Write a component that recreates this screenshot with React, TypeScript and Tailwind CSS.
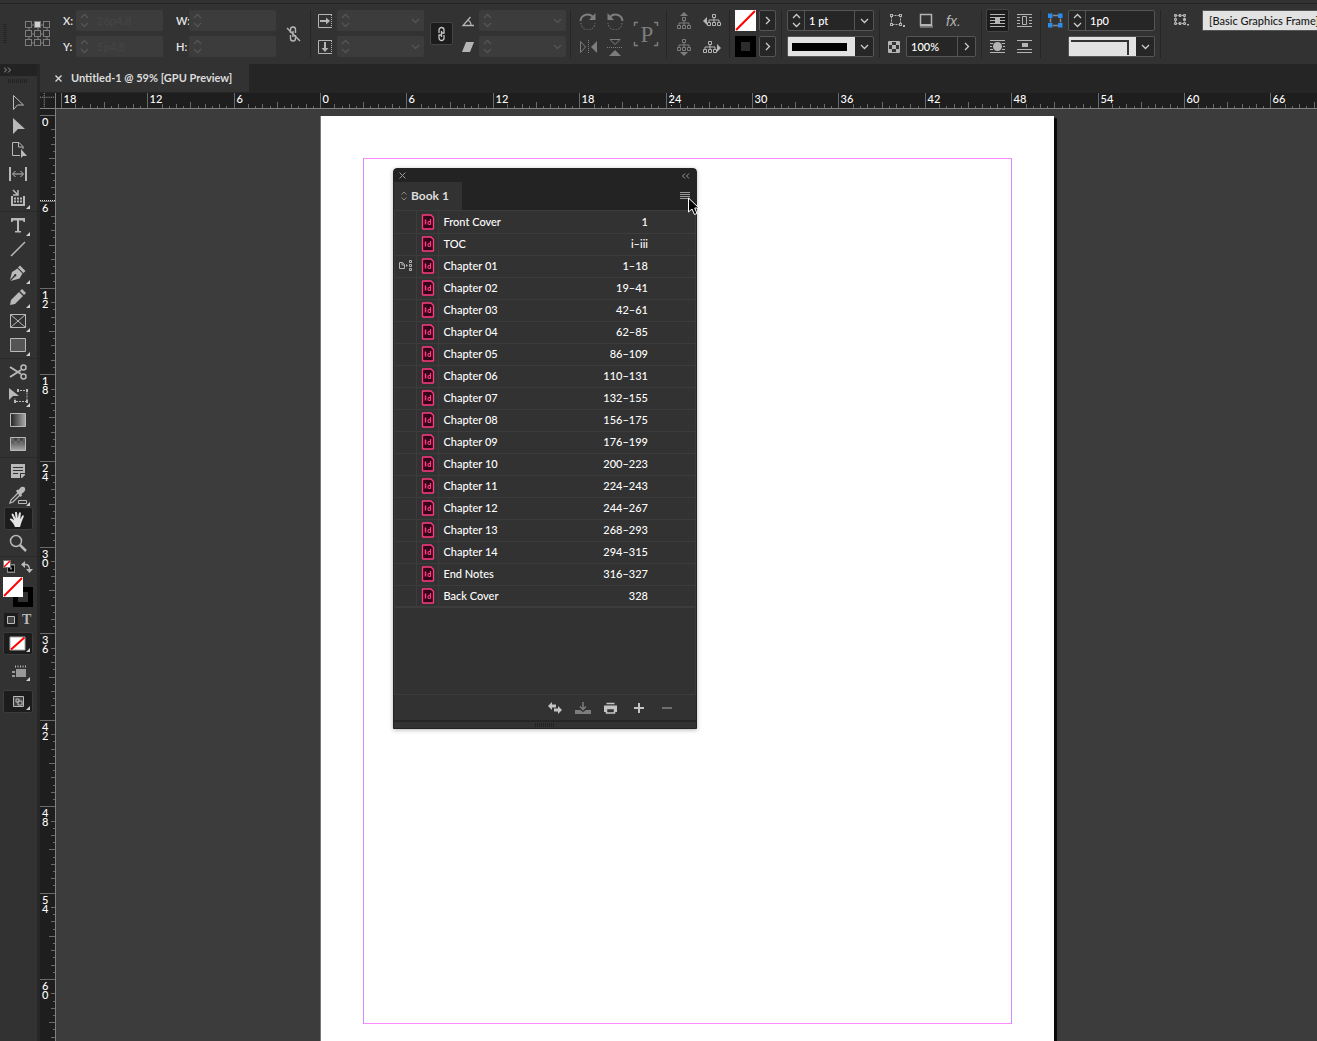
import type { ReactNode } from "react";
import clsx from "clsx";

type IconProps = { children: ReactNode; w?: number; h?: number; className?: string };

const Icon = ({ children, w = 18, h = 18, className }: IconProps) => (
	<svg
		width={w}
		height={h}
		viewBox={`0 0 ${w} ${h}`}
		fill="none"
		stroke="currentColor"
		className={clsx("block shrink-0", className)}
		aria-hidden="true"
	>
		{children}
	</svg>
);

const Separator = () => <div className="h-12 w-px shrink-0 bg-[#262626]" />;

const Stepper = () => (
	<Icon w={9} h={15}>
		<path d="M1 5 4.5 1.5 8 5M1 10l3.500 3.500L8 10" strokeWidth="1.300" />
	</Icon>
);

const ChevronDown = () => (
	<Icon w={9} h={6}>
		<path d="M1 1l3.500 3.500L8 1" strokeWidth="1.300" />
	</Icon>
);

const ChevronRight = () => (
	<Icon w={6} h={9}>
		<path d="M1 1l3.500 3.500L1 8" strokeWidth="1.300" />
	</Icon>
);

type MutedFieldProps = { label: string; value?: string; dropdown?: boolean };

const MutedField = ({ label, value = "", dropdown }: MutedFieldProps) => (
	<div className="flex h-[21px] w-[87px] items-center rounded-xs bg-[#3c3c3c] px-1 text-[#555]">
		<Stepper />
		<input
			id={label}
			aria-label={label}
			defaultValue={value}
			className="ml-2 w-0 flex-1 bg-transparent text-[#454545] outline-none"
		/>
		{dropdown && (
			<button aria-label={`${label} presets`}>
				<ChevronDown />
			</button>
		)}
	</div>
);

const LabelledField = ({ label, text, value }: { label: string; text: string; value?: string }) => (
	<div className="flex items-center">
		<label htmlFor={label} className="w-[13px] font-semibold text-[#e6e6e6]">
			{text}
		</label>
		<MutedField label={label} value={value} />
	</div>
);

const Tree = () => (
	<path d="M7.500 1.500h3v3h-3zM2.500 9.500h3v3h-3zM7.500 9.500h3v3h-3zM12.500 9.500h3v3h-3zM9 4.500v5M4 9V7h10v2" />
);

const NoneSwatch = ({ size }: { size: number }) => (
	<svg width={size} height={size} viewBox="0 0 20 20" aria-hidden="true" className="shrink-0">
		<path d="M0 0h20v20H0z" fill="#fff" />
		<path d="M1 19 19 1" stroke="#f00" strokeWidth="2" />
	</svg>
);

const box = "flex items-center rounded-xs border border-[#555] bg-[#262626]";

const ReferencePoint = () => (
	<Icon w={26} h={26} className="ml-[18px] text-[#7d7d7d]">
		<path d="M7 4h3M16 4h3M7 13h3M16 13h3M7 22h3M16 22h3M4 7v3M4 16v3M13 7v3M13 16v3M22 7v3M22 16v3" />
		{[1, 10, 19].map((y) =>
			[1, 10, 19].map((x) => (
				<rect
					key={`${x}-${y}`}
					x={x - 0.5}
					y={y - 0.5}
					width="6"
					height="6"
					fill={x === 10 && y === 1 ? "#d0d0d0" : "none"}
				/>
			)),
		)}
	</Icon>
);

const TransformGroup = () => (
	<>
		<div className="ml-3 grid gap-[5px]">
			<LabelledField label="x-position" text="X:" value="26p4.8" />
			<LabelledField label="y-position" text="Y:" value="5p4.8" />
		</div>
		<div className="ml-[13px] grid gap-[5px]">
			<LabelledField label="width" text="W:" />
			<LabelledField label="height" text="H:" />
		</div>
		<button aria-label="Constrain proportions" className="ml-2">
			<Icon className="text-[#b4b4b4]">
				<path d="M6.500 8V4.500a2.500 2.500 0 0 1 5 0V8M6.500 10v3.500a2.500 2.500 0 0 0 5 0V10M9 6v6" strokeWidth="1.400" />
				<path d="M3 3l13 13" strokeWidth="1.400" />
			</Icon>
		</button>
		<div className="ml-2"><Separator /></div>
		<div className="ml-1.5 grid gap-[5px]">
			<div className="flex items-center gap-1">
				<Icon w={16} h={16} className="text-[#b4b4b4]">
					<path d="M15 1.500H1.500v13H15" />
					<path d="M14.500 2v13" strokeDasharray="1 1" />
					<path d="M3 8h7" strokeWidth="2" />
					<path d="M9 4.500 13 8l-4 3.500z" fill="currentColor" stroke="none" />
				</Icon>
				<MutedField label="Scale X" dropdown />
			</div>
			<div className="flex items-center gap-1">
				<Icon w={16} h={16} className="text-[#b4b4b4]">
					<path d="M15 1.500H1.500v13H15" />
					<path d="M14.500 2v13" strokeDasharray="1 1" />
					<path d="M8 3v7" strokeWidth="2" />
					<path d="M4.500 9 8 13l3.500-4z" fill="currentColor" stroke="none" />
				</Icon>
				<MutedField label="Scale Y" dropdown />
			</div>
		</div>
		<button
			aria-label="Link scale"
			className="ml-1.5 flex h-[23px] w-[23px] items-center justify-center rounded-xs border border-[#444] bg-[#1c1c1c] text-[#c4c4c4]"
		>
			<Icon w={9} h={16}>
				<path d="M2 7V4a2.500 2.500 0 0 1 5 0v3H4M7 9v3a2.500 2.500 0 0 1-5 0V9h3M4.500 5v6" strokeWidth="1.300" />
			</Icon>
		</button>
		<div className="ml-2 grid gap-[5px]">
			<div className="flex items-center gap-1">
				<Icon w={14} h={14} className="text-[#b4b4b4]">
					<path d="M13 11.500H2L9.500 3M7 6.500q3 1 3 5" strokeWidth="1.300" />
				</Icon>
				<MutedField label="Rotation" dropdown />
			</div>
			<div className="flex items-center gap-1">
				<Icon w={14} h={14} className="text-[#b4b4b4]">
					<path d="M5 2h8l-4 10H1z" fill="currentColor" stroke="none" />
				</Icon>
				<MutedField label="Shear" dropdown />
			</div>
		</div>
	</>
);

const FlipGroup = () => (
	<>
		<div className="ml-2 grid grid-cols-[18px_18px] gap-x-[9px] gap-y-2 text-[#7d7d7d]">
			<button aria-label="Rotate clockwise">
				<Icon>
					<path d="M1.500 9a7 7 0 0 1 13-3" strokeWidth="2" />
					<path d="M16.500 1v7H10z" fill="currentColor" stroke="none" />
					<path d="M2 11a7 7 0 0 0 14 0" strokeDasharray="1.500 1.500" />
				</Icon>
			</button>
			<button aria-label="Rotate counter-clockwise">
				<Icon>
					<path d="M16.500 9a7 7 0 0 0-13-3" strokeWidth="2" />
					<path d="M1.500 1v7H8z" fill="currentColor" stroke="none" />
					<path d="M16 11a7 7 0 0 1-14 0" strokeDasharray="1.500 1.500" />
				</Icon>
			</button>
			<button aria-label="Flip horizontal">
				<Icon>
					<path d="M1.500 3.500v11L6.500 9z" />
					<path d="M9.500 2v14" strokeDasharray="1 1" />
					<path d="M18 3v12l-6-6z" fill="currentColor" stroke="none" />
				</Icon>
			</button>
			<button aria-label="Flip vertical">
				<Icon>
					<path d="M4 1.500h10L9 6.500z" />
					<path d="M1 9.500h16" strokeDasharray="1 1" />
					<path d="M3 18h12l-6-6z" fill="currentColor" stroke="none" />
				</Icon>
			</button>
		</div>
		<Icon w={28} h={28} className="ml-2 text-[#7d7d7d]">
			<path d="M2.500 6V2.500H6M22 2.500h3.500V6M2.500 22v3.500H6M22 25.500h3.500V22" strokeWidth="1.500" />
			<text x="15" y="22" fontSize="23" textAnchor="middle" fill="currentColor" stroke="none" fontFamily="Liberation Serif, serif">
				P
			</text>
		</Icon>
		<div className="ml-1.5"><Separator /></div>
		<div className="ml-2 grid grid-cols-[18px_18px] gap-x-[10px] gap-y-2">
			<button aria-label="Select container" className="text-[#7d7d7d]">
				<Icon>
					<path d="M5 4h8L9 0z" fill="currentColor" stroke="none" />
					<g transform="translate(0 4)"><Tree /></g>
				</Icon>
			</button>
			<button aria-label="Select previous object" className="text-[#b4b4b4]">
				<Icon>
					<path d="M4 5v8L0 9z" fill="currentColor" stroke="none" />
					<g transform="translate(2 1)"><Tree /></g>
				</Icon>
			</button>
			<button aria-label="Select content" className="text-[#7d7d7d]">
				<Icon>
					<path d="M5 14h8l-4 4z" fill="currentColor" stroke="none" />
					<Tree />
				</Icon>
			</button>
			<button aria-label="Select next object" className="text-[#b4b4b4]">
				<Icon>
					<path d="M14 6v8l4-4z" fill="currentColor" stroke="none" />
					<g transform="translate(-2 2)"><Tree /></g>
				</Icon>
			</button>
		</div>
	</>
);

const StrokeGroup = () => (
	<>
		<div className="ml-[5px] grid gap-[5px]">
			<div className="flex gap-[3px]">
				<NoneSwatch size={21} />
				<button aria-label="Fill" className={clsx(box, "w-[17px] justify-center text-[#ccc]")}>
					<ChevronRight />
				</button>
			</div>
			<div className="flex gap-[3px]">
				<div className="flex h-[21px] w-[21px] items-center justify-center bg-black">
					<div className="h-[9px] w-[9px] bg-[#2c2c2c]" />
				</div>
				<button aria-label="Stroke" className={clsx(box, "w-[17px] justify-center text-[#ccc]")}>
					<ChevronRight />
				</button>
			</div>
		</div>
		<div className="ml-[5px]"><Separator /></div>
		<div className="ml-[5px] grid gap-[5px] text-[#ccc]">
			<div className={clsx(box, "h-[21px] w-[87px]")}>
				<div className="flex w-4 justify-center"><Stepper /></div>
				<input
					aria-label="Stroke weight"
					defaultValue="1 pt"
					className="h-full w-0 flex-1 border-x border-[#555] bg-transparent pl-1 text-white outline-none"
				/>
				<button aria-label="Stroke weights" className="flex w-[18px] justify-center">
					<ChevronDown />
				</button>
			</div>
			<div className={clsx(box, "relative h-[21px] w-[87px]")}>
				<div className="flex h-full flex-1 items-center bg-[#e2e2e2] px-1">
					<div className="mr-1 h-2 w-full bg-black" />
				</div>
				<div className="flex w-[18px] justify-center"><ChevronDown /></div>
				<select aria-label="Stroke type" className="absolute inset-0 appearance-none opacity-0" />
			</div>
		</div>
		<div className="ml-[5px]"><Separator /></div>
		<div className="ml-2 grid gap-[5px] text-[#b4b4b4]">
			<div className="flex h-[21px] items-center gap-3">
				<button aria-label="Corner shape">
					<Icon w={17}>
						<path d="M3.500 3.500h9v9h-9z" strokeDasharray="2 1" />
						<path d="M2 2h3v3H2zM11 2h3v3h-3zM2 11h3v3H2zM11 11h3v3h-3zM15 13h2v2h-2z" fill="currentColor" stroke="none" />
						<path d="M3 3h1v1H3zM12 3h1v1h-1zM3 12h1v1H3zM12 12h1v1h-1z" fill="#323232" stroke="none" />
					</Icon>
				</button>
				<button aria-label="Drop shadow">
					<Icon w={17}>
						<path d="M3 13h13v3H3z" fill="#6a6a6a" stroke="none" />
						<path d="M3.500 2.500h11v11h-11z" strokeWidth="1.500" fill="#323232" />
						<path d="M3 13h12" strokeWidth="2" />
					</Icon>
				</button>
				<button aria-label="Effects" className="font-['Liberation_Sans',sans-serif] text-sm italic">
					fx.
				</button>
			</div>
			<div className="flex items-center gap-[6px]">
				<Icon w={12} h={12}>
					<path d="M.5.5h11v11H.5z" />
					<path d="M4 4h4v4H4zM1 1h3v3H1zM8 1h3v3H8zM1 8h3v3H1zM8 8h3v3H8z" fill="currentColor" stroke="none" />
				</Icon>
				<div className={clsx(box, "h-[21px] w-[70px]")}>
					<input
						aria-label="Opacity"
						defaultValue="100%"
						className="h-full w-0 flex-1 border-r border-[#555] bg-transparent pl-1 text-white outline-none"
					/>
					<button aria-label="Opacity slider" className="flex w-[17px] justify-center text-[#ccc]">
						<ChevronRight />
					</button>
				</div>
			</div>
		</div>
	</>
);

const wrapButton = "flex h-[23px] w-[23px] items-center justify-center rounded-xs";

const WrapGroup = () => (
	<div className="ml-1 grid grid-cols-[23px_23px] gap-x-1 gap-y-[3px] text-[#b4b4b4]">
		<button aria-label="No text wrap" className={clsx(wrapButton, "border border-[#444] bg-[#1c1c1c]")}>
			<Icon w={15} h={15}>
				<path d="M0 1.500h15M0 4.500h15M0 7.500h15M0 10.500h15M0 13.500h15" />
				<path d="M5 4h5v7H5z" fill="currentColor" stroke="none" />
			</Icon>
		</button>
		<button aria-label="Wrap around bounding box" className={wrapButton}>
			<Icon w={15} h={15}>
				<path d="M0 1.500h15M0 4.500h3M12 4.500h3M0 7.500h3M12 7.500h3M0 10.500h3M12 10.500h3M0 13.500h15M5.500 3.500h4v8h-4z" />
			</Icon>
		</button>
		<button aria-label="Wrap around object shape" className={wrapButton}>
			<Icon w={15} h={15}>
				<path d="M0 1.500h15M0 4.500h3M12 4.500h3M0 7.500h2M13 7.500h2M0 10.500h3M12 10.500h3M0 13.500h15" />
				<circle cx="7.500" cy="7.500" r="4.500" fill="currentColor" stroke="none" />
			</Icon>
		</button>
		<button aria-label="Jump object" className={wrapButton}>
			<Icon w={15} h={15}>
				<path d="M0 1.500h15M0 10.500h15M0 13.500h15" />
				<path d="M5 4h6v4H5z" fill="currentColor" stroke="none" />
			</Icon>
		</button>
	</div>
);

const CornerGroup = () => (
	<div className="ml-1.5 flex items-start gap-1 text-[#ccc]">
		<Icon w={17} h={21}>
			<path d="M6 5.500h5M6 15.500h5M3.500 8.500v4M13.500 8.500v4" stroke="#8a8a8a" strokeWidth="1.500" />
			<path d="M1 3.500h4.500V8H1zM11 3.500h4.500V8H11zM1 13h4.500v4.500H1zM11 13h4.500v4.500H11z" fill="#2d8ceb" stroke="none" />
		</Icon>
		<div className="grid gap-[5px]">
			<div className={clsx(box, "h-[21px] w-[87px]")}>
				<div className="flex w-4 justify-center"><Stepper /></div>
				<input
					aria-label="Corner size"
					defaultValue="1p0"
					className="h-full w-0 flex-1 border-l border-[#555] bg-transparent pl-1 text-white outline-none"
				/>
			</div>
			<div className={clsx(box, "relative h-[21px] w-[87px]")}>
				<div className="h-full flex-1 bg-[#e2e2e2] pt-[3px] pr-[7px] pl-0.5">
					<div className="h-[15px] border-t-2 border-r-2 border-[#333]" />
				</div>
				<div className="flex w-[18px] justify-center"><ChevronDown /></div>
				<select aria-label="Corner options" className="absolute inset-0 appearance-none opacity-0" />
			</div>
		</div>
	</div>
);

const ControlBar = () => (
	<header className="h-16 shrink-0 overflow-hidden bg-[#323232]">
		<div className="mb-1.5 h-1 border-b border-[#222]" />
		<div className="flex h-[47px] items-center *:shrink-0">
			<Icon w={4} h={20} className="ml-[3px] text-[#222]">
				<path d="M2 0v20" strokeWidth="3" strokeDasharray="1 1" />
			</Icon>
			<ReferencePoint />
			<TransformGroup />
			<div className="ml-1"><Separator /></div>
			<FlipGroup />
			<div className="ml-2"><Separator /></div>
			<StrokeGroup />
			<div className="ml-[5px]"><Separator /></div>
			<WrapGroup />
			<div className="ml-1"><Separator /></div>
			<CornerGroup />
			<div className="ml-[5px]"><Separator /></div>
			<div className="ml-3 flex items-center gap-3 self-start">
				<Icon w={17} h={21} className="text-[#b4b4b4]">
					<path d="M2.500 5.500h9v8h-9z" strokeDasharray="2 1" />
					<path d="M1.500 4.500h2v2h-2zM6 4.500h2v2H6zM10.500 4.500h2v2h-2zM1.500 8.500h2v2h-2zM10.500 8.500h2v2h-2zM1.500 12.500h2v2h-2zM6 12.500h2v2H6zM10.500 12.500h2v2h-2z" />
					<path d="M14 14h2v1.500h-2z" fill="currentColor" stroke="none" />
				</Icon>
				<select
					aria-label="Object style"
					className="h-[21px] w-[180px] shrink-0 appearance-none border border-[#555] bg-[#e2e2e2] px-1.5 text-[#1c1c1c]"
				>
					<option>[Basic Graphics Frame]</option>
				</select>
			</div>
		</div>
	</header>
);

const flyout = <path d="M30 20v-4l-4 4z" fill="#d0d0d0" stroke="none" />;

type ToolDef = { name: string; art: ReactNode; more?: boolean; active?: boolean };

const toolGroups: ToolDef[][] = [
	[
		{ name: "Selection", art: <path d="M13.500 5.500v14l4-4.500h6z" /> },
		{ name: "Direct Selection", art: <path d="M13 4v16l5-5h7z" fill="currentColor" stroke="none" /> },
		{
			name: "Page",
			art: (
				<>
					<path d="M20 17.500h-7.500v-13H19l4 4V11M18.500 4.500V9H23" />
					<path d="M21 11v9l2-2h4z" fill="currentColor" stroke="none" />
				</>
			),
		},
		{
			name: "Gap",
			art: (
				<>
					<path d="M10 5v14M26 5v14" strokeWidth="2" />
					<path d="M13 12h10M15.500 9l-3 3 3 3M20.500 9l3 3-3 3" />
				</>
			),
		},
		{
			name: "Content Collector",
			more: true,
			art: (
				<>
					<path d="M12 10v9h12v-9" strokeWidth="2" />
					<path d="M13 4l4 4M18 4v5h-5" strokeWidth="1.500" />
					<path d="M14 12.500h8M14 15.500h8" strokeDasharray="2 1" strokeWidth="2" />
				</>
			),
		},
	],
	[
		{
			name: "Type",
			more: true,
			art: <path d="M11 5h14v4h-1.500L23 7.500h-4V18h2v1.500h-6V18h2V7.500h-4L12.500 9H11z" fill="currentColor" stroke="none" />,
		},
		{ name: "Line", art: <path d="M11 19 25 5" strokeWidth="1.500" /> },
		{
			name: "Pen",
			more: true,
			art: (
				<path
					d="M20 4.500 25.500 10l-2 2L18 6.500zM17.500 7.500l5 5-3 5-9 2.500 4.500-4.500a1.200 1.200 0 1 0-1-1L10 19l2-8z"
					fill="currentColor"
					stroke="none"
				/>
			),
		},
		{
			name: "Pencil",
			more: true,
			art: <path d="M22 4l4 4-2 2-4-4zM19 7l4 4-8 8-5 1 1-5z" fill="currentColor" stroke="none" />,
		},
		{ name: "Rectangle Frame", more: true, art: <path d="M10.500 5.500h15v13h-15zM10.500 5.500l15 13M25.500 5.500l-15 13" /> },
		{ name: "Rectangle", more: true, art: <path d="M10.500 5.500h15v13h-15z" fill="#555" /> },
	],
	[
		{
			name: "Scissors",
			art: (
				<>
					<path d="M10 7l11 7M10 17l11-7" strokeWidth="2" />
					<circle cx="23.500" cy="7.500" r="2.500" strokeWidth="1.500" />
					<circle cx="23.500" cy="16.500" r="2.500" strokeWidth="1.500" />
				</>
			),
		},
		{
			name: "Free Transform",
			more: true,
			art: (
				<>
					<path d="M9 4v12l4-4h6z" fill="currentColor" stroke="none" />
					<path d="M17 6.500h10v11H15V14" strokeDasharray="2 1" />
					<path d="M26 5h2v3h-2zM26 16h2v3h-2zM14 16h2v3h-2zM17 5h2v3h-2z" fill="currentColor" stroke="none" />
				</>
			),
		},
		{ name: "Gradient Swatch", art: <path d="M10.500 5.500h15v13h-15z" fill="url(#swatch-fade)" /> },
		{
			name: "Gradient Feather",
			art: (
				<>
					<path d="M10.500 5.500h15v13h-15z" fill="url(#feather-fade)" />
					<path d="M11 7.500h14M14 10.500h11" stroke="#777" strokeWidth="3" strokeDasharray="3 3" opacity="0.600" />
				</>
			),
		},
	],
	[
		{
			name: "Note",
			art: (
				<>
					<path d="M11 5h14v9h-5v5h-9zM25 15v1l-3 3h-1v-4z" fill="currentColor" stroke="none" />
					<path d="M13 8.500h10M13 11.500h10M13 14.500h5" stroke="#323232" />
				</>
			),
		},
		{
			name: "Eyedropper",
			more: true,
			art: (
				<>
					<path d="M18 10l-7 7-1 3 3-1 7-7" strokeWidth="1.300" />
					<path d="M16 8l1.500-1.500 1 .5 2.500-3q3-1 4 1t-1 4l-2.500 2 .5 1.500L20.500 14z" fill="currentColor" stroke="none" />
					<path d="M18.500 17.500h8v3h-8z" />
				</>
			),
		},
		{
			name: "Hand",
			active: true,
			art: (
				<path
					d="M15 20q-1-3-2.500-4.500l-2.700-3q.2-1.700 2.200-.7l2.200 1.700-2.700-6q.5-1.800 1.900-.4l2.200 4.400-.6-6q1-1.600 2-.1l.8 6 1.200-5.700q1.300-1.200 1.900.3l-.6 6.300 2-3.800q1.600-.8 1.500.9l-2.300 5.600-1.500 5z"
					fill="#e4e4e4"
					stroke="none"
				/>
			),
		},
		{
			name: "Zoom",
			art: (
				<>
					<circle cx="16" cy="10" r="5.500" strokeWidth="1.500" />
					<path d="M20 14l6 6" strokeWidth="2.500" />
				</>
			),
		},
	],
];

const ToolRail = () => (
	<aside className="flex w-10 shrink-0 flex-col border-r-3 border-[#272727] bg-[#323232] text-[#b9b9b9]">
		<div className="flex h-3 items-center bg-[#232323] pl-1 text-[#999]">
			<Icon w={8} h={6}>
				<path d="M0 .5 2.500 3 0 5.500M4 .5 6.500 3 4 5.500" />
			</Icon>
		</div>
		<Icon w={20} h={4} className="mt-[3px] mb-[7px] ml-2 text-[#222]">
			<path d="M0 2h20" strokeWidth="4" strokeDasharray="1 1" />
		</Icon>
		<svg width="0" height="0" className="absolute" aria-hidden="true">
			<linearGradient id="swatch-fade">
				<stop offset="0" stopColor="#222" />
				<stop offset="1" stopColor="#aaa" />
			</linearGradient>
			<linearGradient id="feather-fade" x1="0" y1="0" x2="0" y2="1">
				<stop offset="0" stopColor="#333" />
				<stop offset="1" stopColor="#aaa" />
			</linearGradient>
		</svg>
		{toolGroups.map((group, i) => (
			<div key={i}>
				{group.map(({ name, art, more, active }) => (
					<button key={name} aria-label={`${name} Tool`} className="block h-6 w-full">
						<Icon w={37} h={24}>
							{active && <rect x="4.500" y=".5" width="28" height="22" rx="2" fill="#1c1c1c" stroke="#3d3d3d" />}
							{art}
							{more && <g transform="translate(0 3)">{flyout}</g>}
						</Icon>
					</button>
				))}
				<div className="flex h-[3px] items-center">
					<div className="h-px w-full bg-[#292929]" />
				</div>
			</div>
		))}
		<div className="mt-0.5 flex items-center justify-between pr-1 pl-[3px]">
			<button aria-label="Default fill and stroke">
				<Icon w={12} h={13}>
					<path d="M4 4h8v9H4z" fill="#888" stroke="none" />
					<path d="M6 6.500h4v4H6z" stroke="#000" strokeWidth="2" fill="#888" />
					<path d="M.5.5h7v7h-7z" fill="#fff" stroke="#777" />
					<path d="M1 7l6-6" stroke="#f00" strokeWidth="1.500" />
				</Icon>
			</button>
			<button aria-label="Swap fill and stroke">
				<Icon w={12} h={12}>
					<path d="M3 3.500h2Q8.500 4 8.500 9" strokeWidth="1.300" />
					<path d="M0 3.500 4 0v7zM5 8h7l-3.500 4z" fill="currentColor" stroke="none" />
				</Icon>
			</button>
		</div>
		<Icon w={37} h={32} className="mt-1">
			<path d="M15.500 12.500h15v15h-15z" fill="#323232" stroke="#000" strokeWidth="5" />
			<path d="M3 0h20v20H3z" fill="#fff" stroke="none" />
			<path d="M4 19 22 1" stroke="#f00" strokeWidth="2" />
		</Icon>
		<div className="mt-[3px] flex items-center pl-1">
			<button aria-label="Formatting affects container">
				<Icon w={14} h={14}>
					<path d="M0 0h14v14H0z" fill="#1c1c1c" stroke="none" />
					<path d="M3.500 3.500h7v7h-7z" fill="#444" />
				</Icon>
			</button>
			<button
				aria-label="Formatting affects text"
				className="ml-1 font-['Liberation_Serif',serif] text-sm leading-4 font-bold"
			>
				T
			</button>
		</div>
		<button aria-label="Apply none" className="mt-1">
			<Icon w={37} h={23}>
				<rect x="3.500" y=".5" width="29" height="22" rx="2" fill="#1c1c1c" stroke="#3d3d3d" />
				<path d="M10 5h15v13H10z" fill="#fff" stroke="#aaa" />
				<path d="M11 17.500 24.500 5.500" stroke="#f00" strokeWidth="2" />
				{flyout}
			</Icon>
		</button>
		<button aria-label="View options" className="mt-1.5">
			<Icon w={37} h={23}>
				<path d="M16 8h10v8H16zM12 10h3v2h-3zM12 14h3v2h-3z" fill="#999" stroke="none" />
				<path d="M15 5.500h11" strokeDasharray="1 1.500" strokeWidth="2" />
				{flyout}
			</Icon>
		</button>
		<button aria-label="Screen mode" className="mt-1.5">
			<Icon w={37} h={23}>
				<rect x="3.500" y=".5" width="29" height="22" rx="2" fill="#1c1c1c" stroke="#3d3d3d" />
				<path d="M13.500 6.500h10v10h-10z" fill="#444" />
				<path d="M16 9h3v3h-3zM18 11h4v4h-4z" />
				{flyout}
			</Icon>
		</button>
	</aside>
);

// Six picas take up 86.4 pixels at 59%.
const SIX_PICAS = 86.4;

const halfPicas = (from: number, to: number) =>
	Array.from({ length: to - from + 1 }, (_, i) => from + i).filter((n) => (n + 120) % 12 !== 1);

const tickLength = (n: number) => {
	if (n % 12 === 0) return 15;
	if (n % 6 === 0) return 6;
	return n % 2 === 0 ? 4 : 2;
};

const tickAt = (origin: number, n: number) => Math.round(origin + (n * SIX_PICAS) / 12) + 0.5;

const HorizontalRuler = () => (
	<svg className="h-4 w-0 flex-1 overflow-visible border-b border-[#808080]" aria-label="Horizontal ruler">
		{halfPicas(-36, 142).map((n) => {
			const x = tickAt(264, n);
			return (
				<g key={n}>
					<path d={`M${x} 15v-${tickLength(n)}`} stroke="#6a6a6a" />
					{n % 12 === 0 && (
						<text x={x + 2} y="10" className="fill-white text-[11px] font-medium">
							{Math.abs(n / 2)}
						</text>
					)}
				</g>
			);
		})}
		<path d="M615.500 0v15" stroke="#ddd" strokeDasharray="1 2" />
	</svg>
);

const VerticalRuler = () => (
	<svg
		className="h-full w-4 shrink-0 overflow-visible border-r border-[#808080] bg-[#1e1e1e]"
		aria-label="Vertical ruler"
	>
		{halfPicas(0, 128).map((n) => {
			const y = tickAt(6, n);
			return (
				<g key={n}>
					<path d={`M15 ${y}h-${tickLength(n)}`} stroke="#6a6a6a" />
					{n % 12 === 0 &&
						String(n / 2)
							.split("")
							.map((digit, i) => (
								<text key={i} x="2" y={y + 10 + i * 9} className="fill-white text-[11px] font-medium">
									{digit}
								</text>
							))}
				</g>
			);
		})}
		<path d="M0 91.500h15" stroke="#ddd" strokeDasharray="1 1" />
	</svg>
);

const chapters = [
	["Front Cover", "1"],
	["TOC", "i–iii"],
	["Chapter 01", "1–18"],
	["Chapter 02", "19–41"],
	["Chapter 03", "42–61"],
	["Chapter 04", "62–85"],
	["Chapter 05", "86–109"],
	["Chapter 06", "110–131"],
	["Chapter 07", "132–155"],
	["Chapter 08", "156–175"],
	["Chapter 09", "176–199"],
	["Chapter 10", "200–223"],
	["Chapter 11", "224–243"],
	["Chapter 12", "244–267"],
	["Chapter 13", "268–293"],
	["Chapter 14", "294–315"],
	["End Notes", "316–327"],
	["Back Cover", "328"],
];

const styleSource = "Chapter 01";

const DocumentIcon = () => (
	<Icon w={14} h={16} className="mx-auto text-[#ff3b82]">
		<path d="M2 1h8l2.500 2.500V14.500q0 .5-.5.5H2q-.5 0-.5-.5v-13Q1.500 1 2 1z" fill="#330519" strokeWidth="1.300" />
		<path d="M4.500 5.500v5" strokeWidth="1.500" />
		<path d="M9.500 5v5.500M9.500 7.500H8q-1 0-1 1.500t1 1.500h1.500" strokeWidth="1.200" />
	</Icon>
);

const BookPanel = () => (
	<section className="absolute top-[59px] left-[337px] flex h-[561px] w-[304px] flex-col rounded-t border border-[#232323] bg-[#323232] text-white shadow-[0_1px_4px_rgba(0,0,0,0.3)]">
		<div className="flex h-[13px] shrink-0 items-center justify-between bg-[#232323] px-[5px] text-[#999]">
			<button aria-label="Close panel">
				<Icon w={7} h={7}><path d="M.5.5l6 6M6.500.5l-6 6" /></Icon>
			</button>
			<button aria-label="Collapse panel">
				<Icon w={9} h={6}><path d="M3 .5.5 3 3 5.500M7 .5 4.500 3 7 5.500" /></Icon>
			</button>
		</div>
		<div className="flex h-7 shrink-0 justify-between bg-[#232323] pr-1.5">
			<h1 className="flex w-[68px] items-center gap-1 bg-[#323232] pl-[7px] text-xs font-bold text-[#dcdcdc]">
				<Icon w={6} h={10} className="text-[#888]"><path d="M.5 3.500 3 1l2.500 2.500M.5 6.500 3 9l2.500-2.500" /></Icon>
				Book 1
			</h1>
			<button aria-label="Panel menu" className="text-[#999]">
				<Icon w={10} h={8}><path d="M0 .5h10M0 2.500h10M0 4.500h10M0 6.500h10" /></Icon>
			</button>
		</div>
		<div className="flex-1 border border-[#3c3c3c]">
			<table className="w-full table-fixed border-collapse">
				<colgroup>
					<col className="w-[21px]" />
					<col className="w-[22px]" />
					<col />
					<col className="w-[120px]" />
				</colgroup>
				<tbody className="border-b-2 border-[#3c3c3c]">
					{chapters.map(([title, pages]) => (
						<tr key={title} className="h-[22px] border-b border-[#3c3c3c]">
							<td className="border-r border-[#3c3c3c] p-0">
								{title === styleSource && (
									<Icon w={14} h={12} className="ml-1 text-[#b4b4b4]">
										<path d="M.5 2.500h3l2 2v4h-5zM3 2.500V5h2.500M10.500.5h2v2h-2zM10.500 4.500h2v2h-2zM10.500 8.500h2v2h-2z" />
										<path d="M7 4v3l2-1.500z" fill="currentColor" stroke="none" />
									</Icon>
								)}
							</td>
							<td className="border-r border-[#3c3c3c] p-0 pl-0.5"><DocumentIcon /></td>
							<td className="p-0 pl-[5px]">{title}</td>
							<td className="p-0 pr-[47px] text-right">{pages}</td>
						</tr>
					))}
				</tbody>
			</table>
		</div>
		<div className="flex h-[25px] shrink-0 items-center justify-end gap-3 pr-[21px] text-[#c4c4c4]">
			<button aria-label="Synchronize styles">
				<Icon w={16} h={16}>
					<path d="M1 6l4-4v2.500h4v3H5V10zM15 10l-4 4v-2.500H7v-3h4V6z" fill="currentColor" stroke="none" />
				</Icon>
			</button>
			<button aria-label="Save book" className="text-[#7d7d7d]">
				<Icon w={16} h={16}>
					<path d="M8 2v7M5 6.500l3 3 3-3" strokeWidth="1.500" />
					<path d="M0 10h5l3 2 3-2h5v4H0z" fill="currentColor" stroke="none" />
				</Icon>
			</button>
			<button aria-label="Print book">
				<Icon w={16} h={16}>
					<path d="M3.500 3.500h8" strokeWidth="1.500" />
					<path d="M1 5.500h13V12H1z" fill="currentColor" stroke="none" />
					<path d="M3.500 8.500h8v4.500h-8z" fill="#323232" strokeWidth="1.500" />
				</Icon>
			</button>
			<button aria-label="Add document">
				<Icon w={16} h={16}><path d="M8 3v10M3 8h10" strokeWidth="2" /></Icon>
			</button>
			<button aria-label="Remove document" className="text-[#6e6e6e]">
				<Icon w={16} h={16}><path d="M3 8h10" strokeWidth="2" /></Icon>
			</button>
		</div>
		<div className="flex h-2 shrink-0 items-center justify-center border-t-2 border-[#262626]">
			<Icon w={20} h={4} className="text-[#222]">
				<path d="M0 2h20" strokeWidth="4" strokeDasharray="1 1" />
			</Icon>
		</div>
		<Icon w={14} h={20} className="absolute top-[28px] left-[293px]">
			<path d="M1.500 1v14l3.500-3 2.500 5.500 2.500-1-2.300-5.500h4.300z" fill="#000" stroke="#fff" />
		</Icon>
	</section>
);

const Pasteboard = () => (
	<main className="relative flex-1 overflow-hidden bg-[#3c3c3c]">
		<div className="absolute top-[7px] left-[264px] h-[950px] w-[734px] border-l border-[#777] bg-white shadow-[3px_2px_0_#0a0a0a]">
			<div className="mt-[42px] ml-[42px] h-[866px] w-[649px] border border-x-[#c88cff] border-y-[#ff8cff]" />
		</div>
		<BookPanel />
	</main>
);

const App = () => (
	<div className="flex h-screen flex-col overflow-hidden bg-[#252525] font-['Lato','Noto_Sans',sans-serif] text-[11px] leading-4 font-medium select-none">
		<ControlBar />
		<div className="flex min-h-0 flex-1">
			<ToolRail />
			<div className="flex min-w-0 flex-1 flex-col">
				<nav className="flex h-[29px] shrink-0">
					<div className="flex h-7 w-[209px] items-center bg-[#323232] pl-[15px] font-bold text-[#dcdcdc]">
						<button aria-label="Close document" className="mr-[9px]">
							<Icon w={7} h={7}><path d="M.5.5l6 6M6.500.5l-6 6" strokeWidth="1.300" /></Icon>
						</button>
						Untitled-1 @ 59% [GPU Preview]
					</div>
				</nav>
				<div className="flex h-4 shrink-0 bg-[#1e1e1e]">
					<Icon w={16} h={16} className="border-r border-b border-[#808080] text-[#aaa]">
						<path d="M0 4.500h16M4.500 0v16" strokeDasharray="1 1" />
					</Icon>
					<HorizontalRuler />
				</div>
				<div className="flex min-h-0 flex-1">
					<VerticalRuler />
					<Pasteboard />
				</div>
			</div>
		</div>
	</div>
);

export default App;
